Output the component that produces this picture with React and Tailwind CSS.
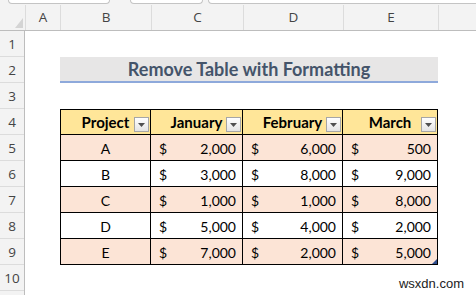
import React from 'react';

const cols = [
  { key: 'A', w: 'w-[35px]' },
  { key: 'B', w: 'w-[91px]' },
  { key: 'C', w: 'w-[92px]' },
  { key: 'D', w: 'w-[100px]' },
  { key: 'E', w: 'w-[95px]' },
  { key: 'F', w: 'flex-1' },
];

const rows = [
  { project: 'A', jan: '2,000', feb: '6,000', mar: '500' },
  { project: 'B', jan: '3,000', feb: '8,000', mar: '9,000' },
  { project: 'C', jan: '1,000', feb: '1,000', mar: '8,000' },
  { project: 'D', jan: '5,000', feb: '4,000', mar: '2,000' },
  { project: 'E', jan: '7,000', feb: '2,000', mar: '5,000' },
];

const cellFont = { fontFamily: 'Lato, "Open Sans", sans-serif' };

const FilterButton = () => (
  <div className="absolute right-[1px] bottom-[2px] w-[15px] h-[15px] border border-[#a6a6a6] bg-gradient-to-b from-[#ffffff] to-[#e4e4e4] flex items-center justify-center">
    <svg width="7" height="4" viewBox="0 0 7 4">
      <path d="M0 0 L7 0 L3.5 4 Z" fill="#505050" />
    </svg>
  </div>
);

const HeaderCell = ({ label, w, first }) => (
  <div
    className={`${w} relative h-[26px] bg-[#ffe699] border-t border-r border-b border-black ${first ? 'border-l' : ''} flex items-center justify-center font-bold text-[15px] text-black pt-[1px]`}
    style={cellFont}
  >
    {label}
    <FilterButton />
  </div>
);

const MoneyCell = ({ value, w, striped, last }) => (
  <div
    className={`${w} relative h-[26px] border-r border-b border-black ${striped ? 'bg-[#fce4d6]' : 'bg-white'} flex items-center justify-between pl-[8px] pr-[6px] text-[14px] text-black pt-[2px]`}
    style={cellFont}
  >
    <span>$</span>
    <span>{value}</span>
    {last && (
      <svg className="absolute right-0 bottom-0" width="5" height="5" viewBox="0 0 5 5">
        <path d="M5 0 L5 5 L0 5 Z" fill="#2e4c8c" />
      </svg>
    )}
  </div>
);

const App = () => {
  return (
    <div className="w-[476px] h-[295px] overflow-hidden bg-white" style={{ fontFamily: '"Open Sans", "Liberation Sans", sans-serif' }}>
      {/* ribbon boxes peeking in at the top */}
      <div className="h-[5px] bg-[#f3f3f3] flex overflow-hidden">
        <div className="ml-[8px] w-[102px] h-[4px] bg-white border-x border-b border-[#c4c4c4] rounded-b-[5px]" />
        <div className="ml-[20px] w-[73px] h-[4px] bg-white border-x border-b border-[#c4c4c4] rounded-b-[5px]" />
        <div className="ml-[5px] flex-1 mr-[-10px] h-[4px] bg-white border-x border-b border-[#c4c4c4] rounded-b-[5px]" />
      </div>

      {/* column letters */}
      <div className="flex h-[26px] bg-[#f3f3f3] border-b border-[#bdbdbd] text-[13.5px] text-[#444444]">
        <div className="w-[25px] relative">
          <svg className="absolute left-[15px] top-[13px]" width="8" height="10" viewBox="0 0 8 10">
            <path d="M8 0 L8 10 L0 10 Z" fill="#d4d4d4" />
          </svg>
        </div>
        {cols.map((c) => (
          <div key={c.key} className={`${c.w} flex items-center justify-center border-l border-[#dcdcdc]`}>
            {c.key === 'F' ? '' : c.key}
          </div>
        ))}
      </div>

      <div className="flex">
        {/* row numbers */}
        <div className="w-[25px] bg-[#f3f3f3] border-r border-[#bdbdbd] flex flex-col text-[13.5px] text-[#444444]">
          {[1, 2, 3, 4, 5, 6, 7, 8, 9, 10, ''].map((n, i) => (
            <div key={i} className="h-[26px] shrink-0 flex items-center justify-center border-b border-[#dcdcdc] pt-[1px]">
              {n}
            </div>
          ))}
        </div>

        {/* sheet */}
        <div className="flex-1 flex flex-col">
          <div className="h-[26px]" />
          <div className="h-[26px] flex">
            <div className="w-[35px]" />
            <div
              className="w-[378px] h-[26px] bg-[#e7e6e6] border-b-2 border-[#8ea9db] flex items-center justify-center font-bold text-[18px] text-[#44546a]"
              style={cellFont}
            >
              Remove Table with Formatting
            </div>
          </div>
          <div className="h-[26px]" />

          <div className="flex">
            <div className="w-[35px]" />
            <div className="flex flex-col">
              <div className="flex">
                <HeaderCell label="Project" w="w-[91px]" first />
                <HeaderCell label="January" w="w-[92px]" />
                <HeaderCell label="February" w="w-[100px]" />
                <HeaderCell label="March" w="w-[95px]" />
              </div>
              {rows.map((r, i) => {
                const striped = i % 2 === 0;
                return (
                  <div key={r.project} className="flex">
                    <div
                      className={`w-[91px] h-[26px] border-l border-r border-b border-black ${striped ? 'bg-[#fce4d6]' : 'bg-white'} flex items-center justify-center text-[14px] text-black pt-[2px]`}
                      style={cellFont}
                    >
                      {r.project}
                    </div>
                    <MoneyCell value={r.jan} w="w-[92px]" striped={striped} />
                    <MoneyCell value={r.feb} w="w-[100px]" striped={striped} />
                    <MoneyCell value={r.mar} w="w-[95px]" striped={striped} last={i === rows.length - 1} />
                  </div>
                );
              })}
            </div>
          </div>

          <div className="h-[26px] flex items-end justify-end pr-[12px]">
            <span className="text-[13px] leading-[13px] text-[#222222] pb-[1px]" style={{ fontFamily: '"Liberation Sans", Arial, sans-serif' }}>
              wsxdn.com
            </span>
          </div>
        </div>
      </div>
    </div>
  );
};

export default App;
